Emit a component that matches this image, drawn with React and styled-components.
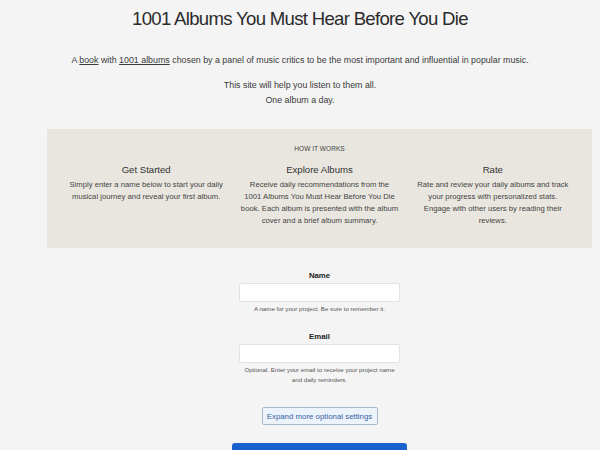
import React from "react";
import styled, { createGlobalStyle } from "styled-components";

const Global = createGlobalStyle`
  html, body { margin: 0; padding: 0; background: #f4f4f4; }
  body { font-family: "Liberation Sans", Arial, sans-serif; color: #333; }
`;

const Page = styled.div`
  display: flex;
  flex-direction: column;
  align-items: center;
  padding-top: 7px;
`;

const Title = styled.h1`
  margin: 0;
  font-size: 18.6px;
  letter-spacing: -0.7px;
  font-weight: 400;
  line-height: 24px;
  color: #2b2b2b;
`;

const Intro = styled.p`
  margin: 23px 0 0;
  font-size: 8.85px;
  line-height: 12px;
  color: #3a3a3a;
  text-align: center;
`;

const Link = styled.a`
  color: #3a3a3a;
  text-decoration: underline;
`;

const Lines = styled.p`
  margin: 11.5px 0 0;
  font-size: 8.85px;
  line-height: 15px;
  text-align: center;
  color: #3a3a3a;
`;

/* lower section: panel and sign-up form share one centred column */
const Lower = styled.div`
  align-self: flex-start;
  margin: 21.5px 0 0 47px;
  width: 545px;
  display: flex;
  flex-direction: column;
  align-items: center;
`;

const Panel = styled.section`
  box-sizing: border-box;
  width: 100%;
  background: #e9e6df;
  padding: 14.5px 20px 21px;
  display: flex;
  flex-direction: column;
  align-items: center;
`;

const Eyebrow = styled.div`
  font-size: 6.6px;
  line-height: 9px;
  color: #444;
  text-transform: uppercase;
`;

const Columns = styled.div`
  margin-top: 10.5px;
  width: 100%;
  display: grid;
  grid-template-columns: repeat(3, 1fr);
  column-gap: 15px;
`;

const Column = styled.div`
  display: flex;
  flex-direction: column;
  align-items: center;
  text-align: center;
`;

const ColTitle = styled.h3`
  margin: 0;
  font-size: 9.6px;
  font-weight: 400;
  line-height: 14px;
  color: #333;
`;

const ColText = styled.p`
  margin: 2px 0 0;
  max-width: ${(p) => p.$measure || 200}px;
  font-size: 7.7px;
  line-height: 12px;
  color: #444;
`;

const Form = styled.form`
  margin-top: 22.7px;
  display: flex;
  flex-direction: column;
  align-items: center;
  width: 176px;
`;

const Field = styled.div`
  display: flex;
  flex-direction: column;
  align-items: center;
  width: 100%;
  margin-bottom: ${(p) => p.$gap || 0}px;
`;

const Label = styled.label`
  font-size: 7.8px;
  font-weight: 700;
  color: #222;
  line-height: 10px;
`;

const Input = styled.input`
  box-sizing: border-box;
  margin-top: 2px;
  width: 161px;
  height: 19px;
  border: 1px solid #e2e2e2;
  border-radius: 2px;
  background: #fff;
  outline: none;
`;

const Help = styled.div`
  margin-top: 2px;
  font-size: 6.15px;
  line-height: 10px;
  color: #555;
  text-align: center;
  width: 158px;
`;

const GhostButton = styled.button`
  margin-top: 22.7px;
  box-sizing: border-box;
  width: 116px;
  height: 18px;
  border: 1px solid #a9b7c9;
  border-radius: 2px;
  background: #edf3fa;
  color: #3761a6;
  font-family: inherit;
  font-size: 7.85px;
  padding: 0;
`;

const PrimaryButton = styled.button`
  margin-top: 18px;
  box-sizing: border-box;
  width: 175px;
  height: 34px;
  border: none;
  border-radius: 3px;
  background: #1a62cb;
  color: #fff;
  font-family: inherit;
  font-size: 8px;
`;

const steps = [
  {
    title: "Get Started",
    text: "Simply enter a name below to start your daily musical journey and reveal your first album.",
  },
  {
    title: "Explore Albums",
    text: "Receive daily recommendations from the 1001 Albums You Must Hear Before You Die book. Each album is presented with the album cover and a brief album summary.",
  },
  {
    title: "Rate",
    text: "Rate and review your daily albums and track your progress with personalized stats. Engage with other users by reading their reviews.",
    measure: 154,
  },
];

export default function App() {
  return (
    <>
      <Global />
      <Page>
        <Title>1001 Albums You Must Hear Before You Die</Title>
        <Intro>
          A <Link href="#">book</Link> with <Link href="#">1001 albums</Link> chosen by a panel of
          music critics to be the most important and influential in popular music.
        </Intro>
        <Lines>
          This site will help you listen to them all.
          <br />
          One album a day.
        </Lines>
        <Lower>
          <Panel>
            <Eyebrow>How it works</Eyebrow>
            <Columns>
              {steps.map((s) => (
                <Column key={s.title}>
                  <ColTitle>{s.title}</ColTitle>
                  <ColText $measure={s.measure}>{s.text}</ColText>
                </Column>
              ))}
            </Columns>
          </Panel>
          <Form onSubmit={(e) => e.preventDefault()}>
            <Field $gap={18}>
              <Label>Name</Label>
              <Input />
              <Help>A name for your project. Be sure to remember it.</Help>
            </Field>
            <Field>
              <Label>Email</Label>
              <Input />
              <Help>Optional. Enter your email to receive your project name and daily reminders.</Help>
            </Field>
            <GhostButton type="button">Expand more optional settings</GhostButton>
            <PrimaryButton type="submit">Create project</PrimaryButton>
          </Form>
        </Lower>
      </Page>
    </>
  );
}
